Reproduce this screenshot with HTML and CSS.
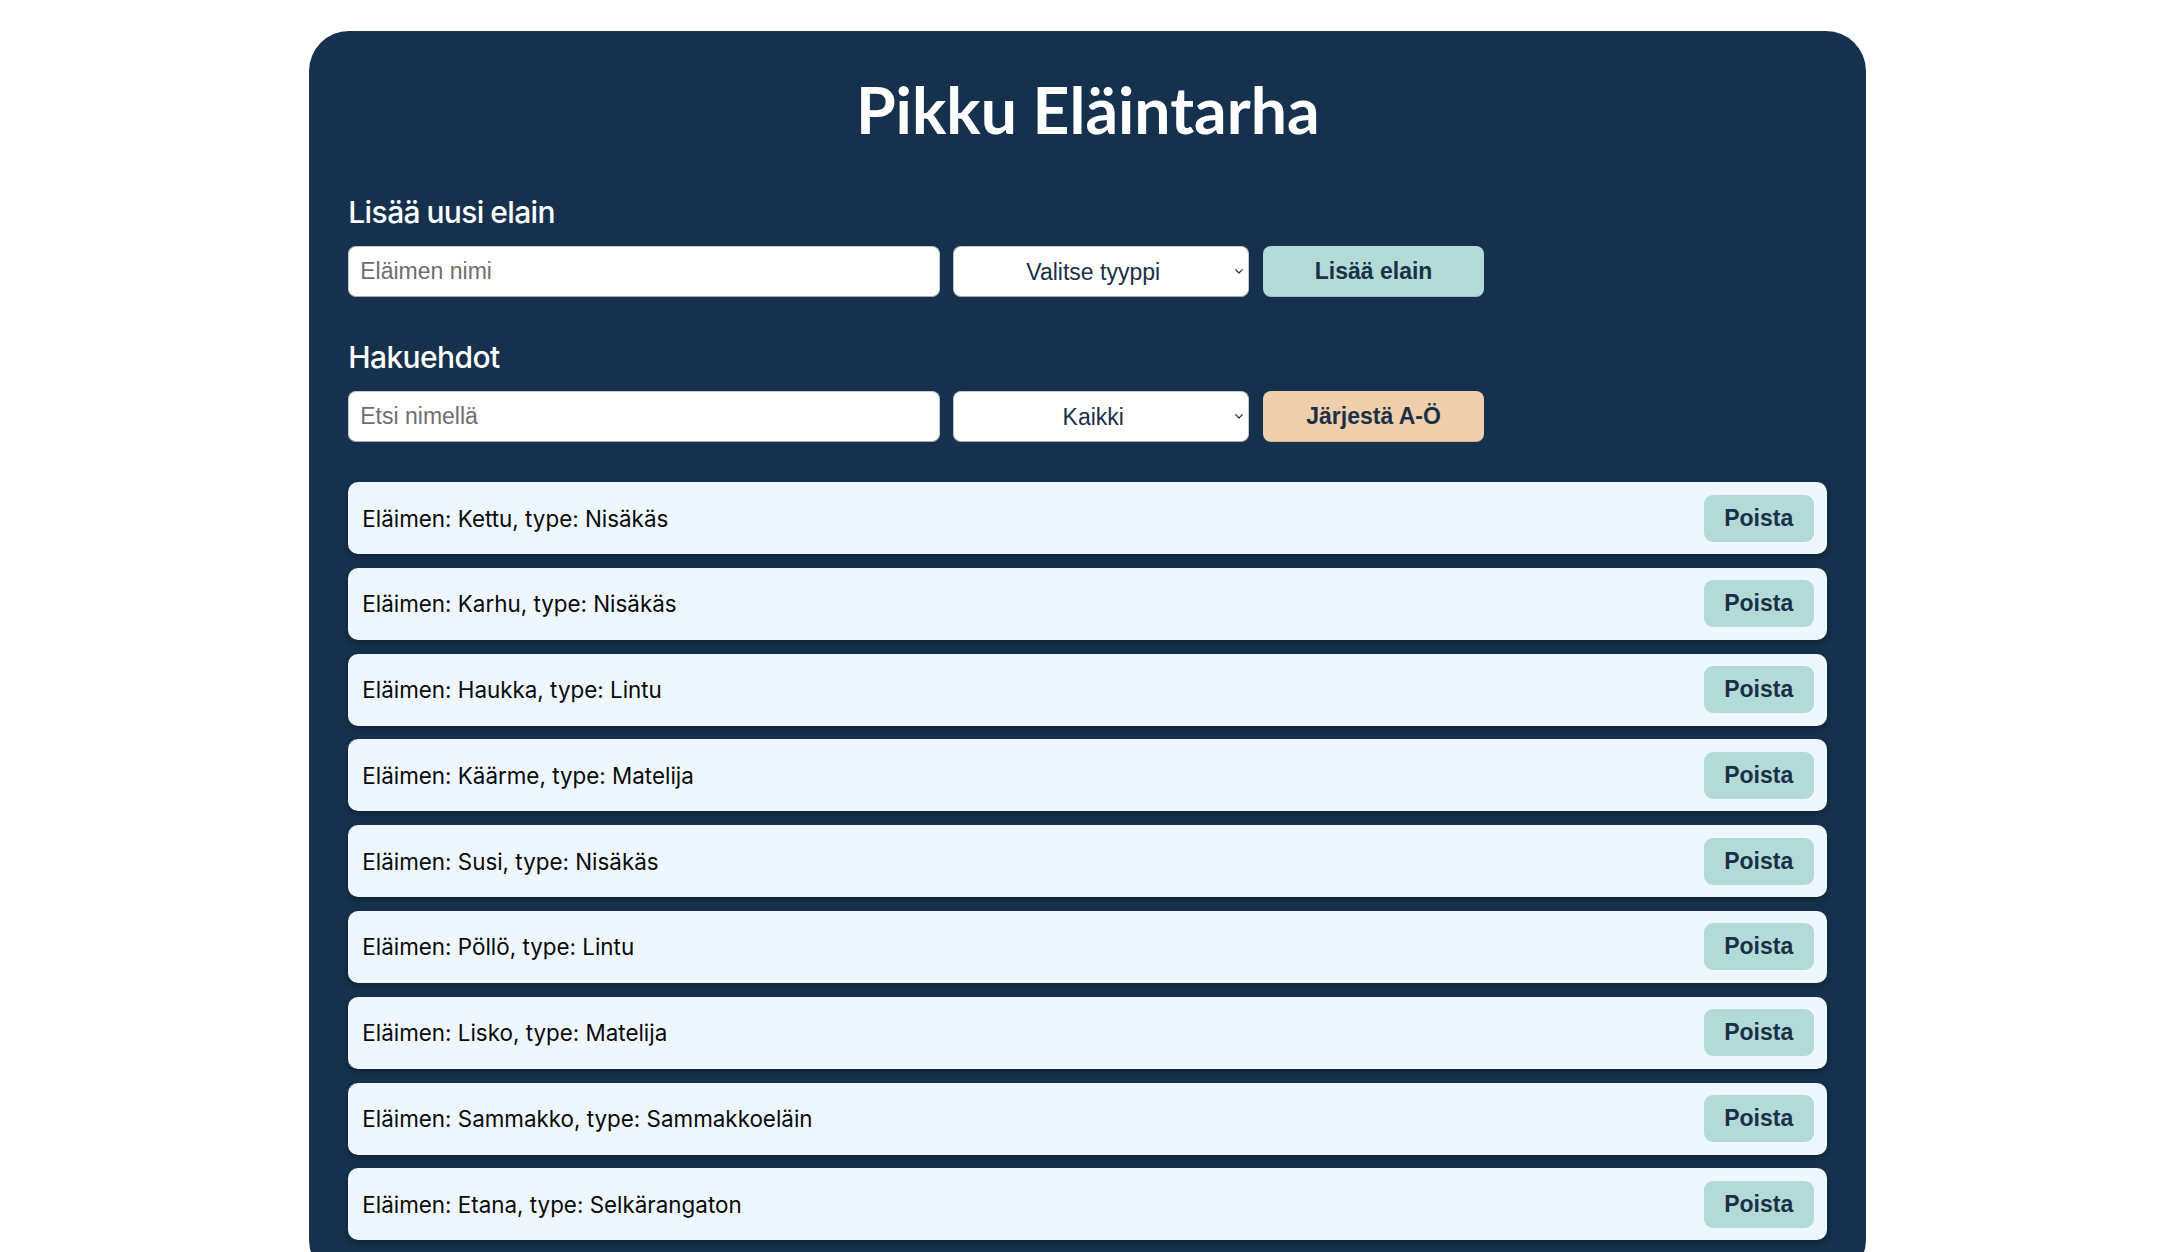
FILE: index.html
```html
<!DOCTYPE html>
<html lang="fi">
<head>
<meta charset="utf-8">
<title>Pikku Eläintarha</title>
<link rel="stylesheet" href="styles.css">
</head>
<body>
<main class="app">
  <h1 class="app-title">Pikku Eläintarha</h1>

  <section class="panel panel-add">
    <h2 class="panel-title">Lisää uusi elain</h2>
    <div class="controls">
      <input class="field field-text" type="text" placeholder="Eläimen nimi">
      <div class="select-wrap">
        <select class="field field-select">
          <option>Valitse tyyppi</option>
          <option>Nisäkäs</option>
          <option>Lintu</option>
          <option>Matelija</option>
          <option>Sammakkoeläin</option>
          <option>Selkärangaton</option>
        </select>
        <svg class="chevron" viewBox="0 0 8 5" width="8" height="5" aria-hidden="true"><path d="M0.7 0.7 L4 4 L7.3 0.7" fill="none" stroke="#2a2f36" stroke-width="1.2" stroke-linecap="round" stroke-linejoin="round"/></svg>
      </div>
      <button class="btn btn-add" type="button">Lisää elain</button>
    </div>
  </section>

  <section class="panel panel-search">
    <h2 class="panel-title">Hakuehdot</h2>
    <div class="controls">
      <input class="field field-text" type="text" placeholder="Etsi nimellä">
      <div class="select-wrap">
        <select class="field field-select">
          <option>Kaikki</option>
          <option>Nisäkäs</option>
          <option>Lintu</option>
          <option>Matelija</option>
          <option>Sammakkoeläin</option>
          <option>Selkärangaton</option>
        </select>
        <svg class="chevron" viewBox="0 0 8 5" width="8" height="5" aria-hidden="true"><path d="M0.7 0.7 L4 4 L7.3 0.7" fill="none" stroke="#2a2f36" stroke-width="1.2" stroke-linecap="round" stroke-linejoin="round"/></svg>
      </div>
      <button class="btn btn-sort" type="button">Järjestä A-Ö</button>
    </div>
  </section>

  <ul class="animal-list">
    <li class="animal"><span class="animal-text">Eläimen: Kettu, type: Nisäkäs</span><button class="btn-delete" type="button">Poista</button></li>
    <li class="animal"><span class="animal-text">Eläimen: Karhu, type: Nisäkäs</span><button class="btn-delete" type="button">Poista</button></li>
    <li class="animal"><span class="animal-text">Eläimen: Haukka, type: Lintu</span><button class="btn-delete" type="button">Poista</button></li>
    <li class="animal"><span class="animal-text">Eläimen: Käärme, type: Matelija</span><button class="btn-delete" type="button">Poista</button></li>
    <li class="animal"><span class="animal-text">Eläimen: Susi, type: Nisäkäs</span><button class="btn-delete" type="button">Poista</button></li>
    <li class="animal"><span class="animal-text">Eläimen: Pöllö, type: Lintu</span><button class="btn-delete" type="button">Poista</button></li>
    <li class="animal"><span class="animal-text">Eläimen: Lisko, type: Matelija</span><button class="btn-delete" type="button">Poista</button></li>
    <li class="animal"><span class="animal-text">Eläimen: Sammakko, type: Sammakkoeläin</span><button class="btn-delete" type="button">Poista</button></li>
    <li class="animal"><span class="animal-text">Eläimen: Etana, type: Selkärangaton</span><button class="btn-delete" type="button">Poista</button></li>
  </ul>
</main>
</body>
</html>
```

FILE: styles.css
```css
* {
  box-sizing: border-box;
}

html, body {
  margin: 0;
  padding: 0;
  background: #ffffff;
}

body {
  padding-left: 3.5px;
  font-family: Inter, "Noto Sans", sans-serif;
  color: #111111;
}

.app {
  width: 1557px;
  margin: 31px auto 0;
  padding: 47px 39px 40px;
  background: #16314d;
  border-radius: 40px;
}

.app-title {
  margin: 0;
  font-family: Lato, Inter, sans-serif;
  font-weight: 700;
  font-size: 64.3px;
  line-height: 63px;
  text-align: center;
  color: #ffffff;
}

.panel {
  margin-top: 42px;
}

.panel-add {
  margin-top: 53px;
}

.panel-title {
  margin: 0 0 16px;
  font-family: Inter, sans-serif;
  font-weight: 500;
  font-size: 30px;
  line-height: 36px;
  letter-spacing: -0.6px;
  word-spacing: -1px;
  color: #ffffff;
}

.controls {
  display: flex;
  gap: 13.5px;
  align-items: stretch;
}

.field {
  height: 51px;
  border: 1px solid #c3c8ce;
  border-bottom-color: #a3abb4;
  border-radius: 8px;
  background: #ffffff;
  font-family: "Liberation Sans", Arial, sans-serif;
  font-size: 23px;
}

.field-text {
  flex: 0 0 40%;
  padding: 0 11px;
  color: #222222;
}

.field-text::placeholder {
  color: #6e6e6e;
}

.select-wrap {
  position: relative;
  flex: 0 0 20%;
}

.field-select {
  width: 100%;
  appearance: none;
  -webkit-appearance: none;
  padding: 0 18px 0 2px;
  text-align: center;
  text-align-last: center;
  color: #1b2f47;
}

.chevron {
  position: absolute;
  right: 6px;
  top: 50%;
  margin-top: -2.5px;
  pointer-events: none;
}

.btn {
  flex: 0 0 15%;
  height: 51px;
  border: 0;
  border-bottom: 1px solid rgba(0, 0, 0, 0.12);
  border-radius: 8px;
  font-family: "Liberation Sans", Arial, sans-serif;
  font-weight: 700;
  font-size: 23px;
  color: #1a3049;
  cursor: pointer;
}

.btn-add {
  background: #b2dad6;
}

.btn-sort {
  background: #f1cfaa;
}

.animal-list {
  list-style: none;
  margin: 40px 0 0;
  padding: 0;
  display: flex;
  flex-direction: column;
  gap: 13.8px;
}

.animal {
  display: flex;
  align-items: center;
  justify-content: space-between;
  height: 72px;
  padding: 0 13.5px 0 14px;
  background: #eff7fe;
  border-radius: 10px;
  box-shadow: 0 3px 6px rgba(0, 0, 0, 0.32);
}

.animal-text {
  font-size: 22.4px;
  color: #0a0a0a;
}

.btn-delete {
  width: 110px;
  height: 47px;
  border: 0;
  border-radius: 9px;
  background: #b2dad6;
  font-family: "Liberation Sans", Arial, sans-serif;
  font-weight: 700;
  font-size: 23px;
  color: #1a3049;
  cursor: pointer;
}
```
